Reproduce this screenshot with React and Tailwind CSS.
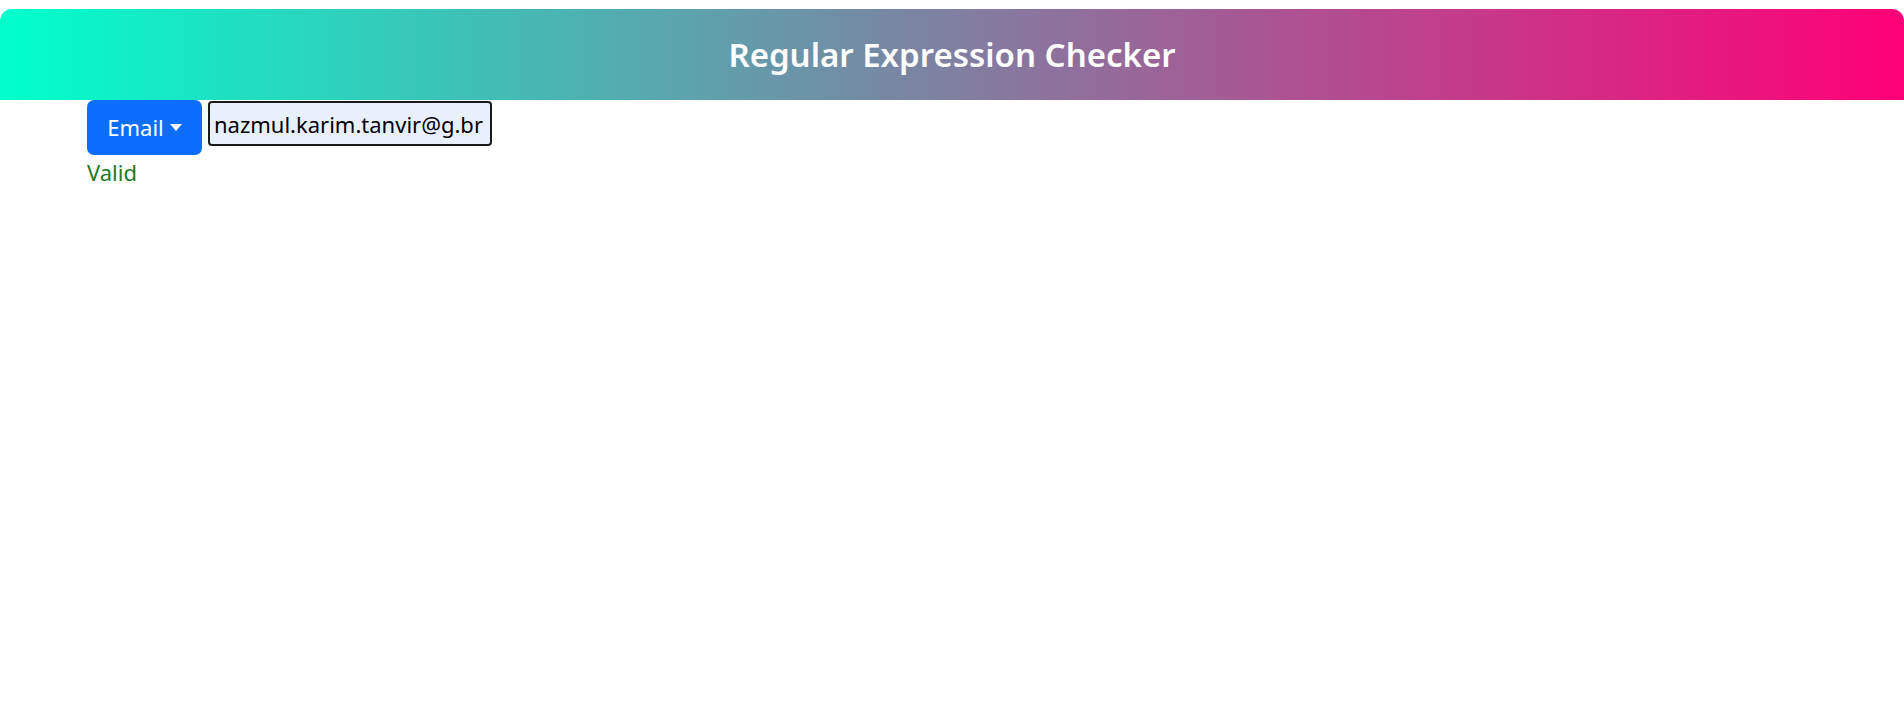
import React, { useState } from 'react';

const fontStack = { fontFamily: '"Noto Sans", "Open Sans", "Liberation Sans", sans-serif' };

function Caret() {
    return (
        <svg className="ml-[6px] h-[8px] w-[12px]" viewBox="0 0 12 8" fill="currentColor">
            <path d="M0 0h12L6 7z" />
        </svg>
    );
}

export default function App() {
    const [value, setValue] = useState('nazmul.karim.tanvir@g.br');
    const isValid = /^[\w.+-]+@[\w-]+(\.[\w-]+)+$/.test(value);

    return (
        <div className="min-h-screen bg-white pt-[9px]" style={fontStack}>
            <header className="flex h-[91px] items-center justify-center rounded-t-[12px] bg-[linear-gradient(to_right,#00ffcc,#ff0077)]">
                <h1 className="text-[33px] font-semibold leading-none text-white">Regular Expression Checker</h1>
            </header>

            <main className="px-[87px]">
                <div className="flex items-start gap-[6px]">
                    <button
                        type="button"
                        className="flex h-[55px] w-[115px] items-center justify-center rounded-[7px] bg-[#0d6efd] text-[22px] text-white"
                    >
                        Email
                        <Caret />
                    </button>
                    <input
                        value={value}
                        onChange={(e) => setValue(e.target.value)}
                        className="mt-[1px] h-[45px] w-[284px] rounded-[4px] border-2 border-[#1a1a1a] bg-[#e8f0fe] px-[4px] text-[22px] text-black outline-none"
                    />
                </div>
                <p className={`mt-[2px] text-[22px] leading-[30px] ${isValid ? 'text-[#1f7a1f]' : 'text-[#c00]'}`}>
                    {isValid ? 'Valid' : 'Invalid'}
                </p>
            </main>
        </div>
    );
}
